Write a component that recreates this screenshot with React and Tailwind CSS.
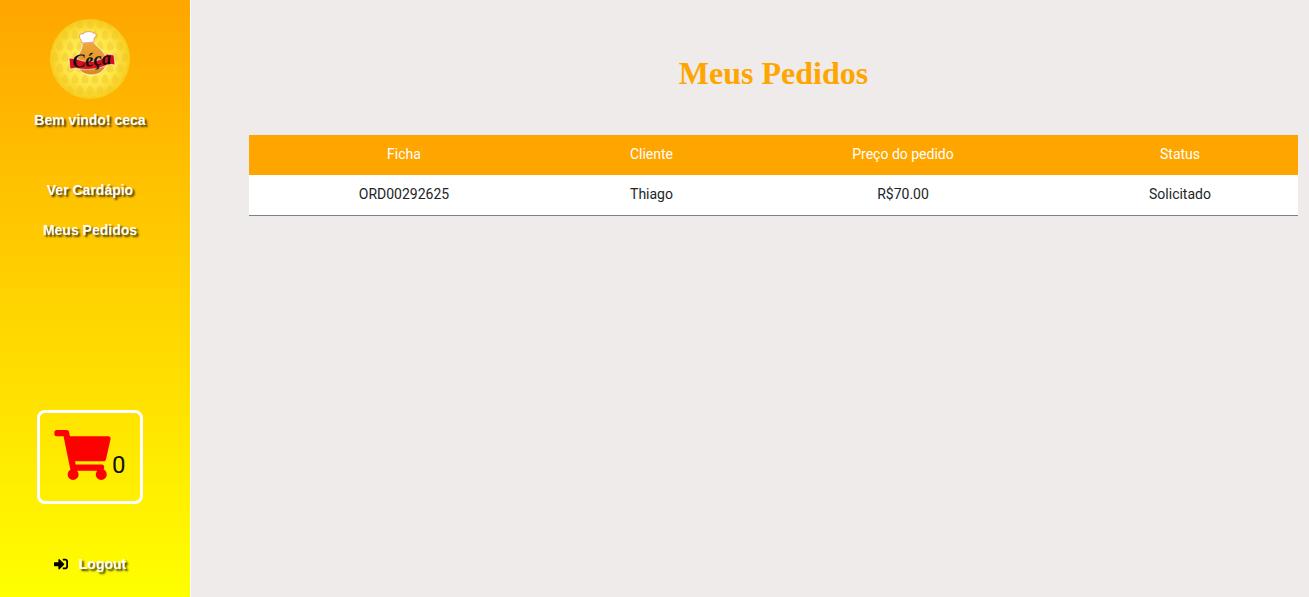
import React from "react";
import { FaShoppingCart, FaSignInAlt } from "react-icons/fa";

function Logo() {
  const drops = [];
  for (let r = 0; r < 8; r++) {
    for (let c = 0; c < 9; c++) {
      drops.push(
        <path
          key={`${r}-${c}`}
          transform={`translate(${c * 10 + (r % 2 ? 5 : 0)} ${r * 11 + 4})`}
          d="M0 -4 C2 -2 3.5 0 3.5 2 A3.5 3.5 0 0 1 -3.5 2 C-3.5 0 -2 -2 0 -4Z"
          fill="#eec62a"
          opacity="0.45"
        />
      );
    }
  }
  return (
    <svg width="80" height="80" viewBox="0 0 80 80">
      <defs>
        <radialGradient id="logoBg">
          <stop offset="0" stopColor="#fff068" />
          <stop offset="0.65" stopColor="#fde648" />
          <stop offset="1" stopColor="#f8cd1e" />
        </radialGradient>
        <linearGradient id="frango" x1="0" y1="0" x2="0" y2="1">
          <stop offset="0" stopColor="#f0a83a" />
          <stop offset="1" stopColor="#d88a1e" />
        </linearGradient>
        <clipPath id="logoClip">
          <circle cx="40" cy="40" r="40" />
        </clipPath>
      </defs>
      <circle cx="40" cy="40" r="40" fill="url(#logoBg)" />
      <g clipPath="url(#logoClip)">{drops}</g>
      {/* frango */}
      <path
        d="M32 24 L44 23 C45 27 53 30 56 38 C59 47 52 56 42 56 C32 56 26 50 27 41 C28 34 33 31 32 24Z"
        fill="url(#frango)"
        stroke="#fff"
        strokeWidth="0.8"
      />
      {/* chapeu */}
      <path
        d="M31 21 C28 17 30 14 33 15 C35 12 42 12 43 14 C47 14 47 18 44 19 L44 23 L32 24Z"
        fill="#fff"
        stroke="#c9504a"
        strokeWidth="0.5"
      />
      {/* faixa */}
      <path
        d="M19 39 L27 40 C36 44 50 44 57 35 L64 36 L65 46 L59 45 C50 50 36 52 26 49 L20 50 Z"
        fill="#d8101c"
        stroke="#fff"
        strokeWidth="0.6"
      />
      <text
        x="42"
        y="47"
        textAnchor="middle"
        fontFamily="'Liberation Serif', serif"
        fontStyle="italic"
        fontWeight="700"
        fontSize="19"
        fill="#111"
        transform="rotate(-6 42 44)"
      >
        Céça
      </text>
    </svg>
  );
}

const linkClass =
  "text-white text-sm font-bold [text-shadow:2px_2px_2px_rgba(0,0,0,0.75)] [font-family:'Liberation_Sans',Arial,sans-serif]";

export default function App() {
  return (
    <div className="flex h-[597px] w-full overflow-hidden bg-[#efebeb]">
      {/* Sidebar */}
      <div className="box-content w-[190px] shrink-0 border-r border-white bg-gradient-to-b from-[#ffa500] to-[#ffff00]">
        <div className="flex w-[180px] flex-col items-center">
          <div className="mt-[19px]">
            <Logo />
          </div>
          <p className={`mt-[11px] h-5 leading-5 ${linkClass}`}>Bem vindo! ceca</p>
          <nav className="mt-[40px] flex flex-col items-center">
            <a className={`h-10 leading-10 ${linkClass}`}>Ver Cardápio</a>
            <a className={`h-10 leading-10 ${linkClass}`}>Meus Pedidos</a>
          </nav>
          <div className="mt-[160px] flex h-[94px] w-[106px] items-center rounded-lg border-[3px] border-white pl-[14px]">
            <FaShoppingCart className="-mt-[4px] h-[50px] w-[57px] shrink-0 text-[#ff0000]" />
            <span className="mt-[16px] ml-px text-2xl leading-none text-[#111] [font-family:Roboto,sans-serif]">0</span>
          </div>
          <a className={`mt-[50px] flex h-5 items-center gap-[11px] leading-5 ${linkClass}`}>
            <FaSignInAlt className="h-[14px] w-[14px] text-black" />
            Logout
          </a>
        </div>
      </div>

      {/* Conteudo */}
      <div className="flex-1 pl-[58px] pr-[11px]">
        <h1 className="mt-[55px] h-9 text-center text-[32px] leading-9 font-bold text-[#ffa500] [font-family:'Liberation_Serif','Times_New_Roman',serif]">
          Meus Pedidos
        </h1>
        <table className="mt-[44px] w-full table-fixed border-collapse text-sm text-[#212529] [font-family:Roboto,sans-serif]">
          <colgroup>
            <col className="w-[310px]" />
            <col className="w-[185px]" />
            <col className="w-[318px]" />
            <col />
          </colgroup>
          <thead>
            <tr className="h-10 bg-[#ffa500] text-white">
              <th className="pb-[2px] font-normal">Ficha</th>
              <th className="pb-[2px] font-normal">Cliente</th>
              <th className="pb-[2px] font-normal">Preço do pedido</th>
              <th className="pb-[2px] font-normal">Status</th>
            </tr>
          </thead>
          <tbody>
            <tr className="h-10 border-b border-[#808080] bg-white">
              <td className="pb-[2px] text-center">ORD00292625</td>
              <td className="pb-[2px] text-center">Thiago</td>
              <td className="pb-[2px] text-center">R$70.00</td>
              <td className="pb-[2px] text-center">Solicitado</td>
            </tr>
          </tbody>
        </table>
      </div>
    </div>
  );
}
